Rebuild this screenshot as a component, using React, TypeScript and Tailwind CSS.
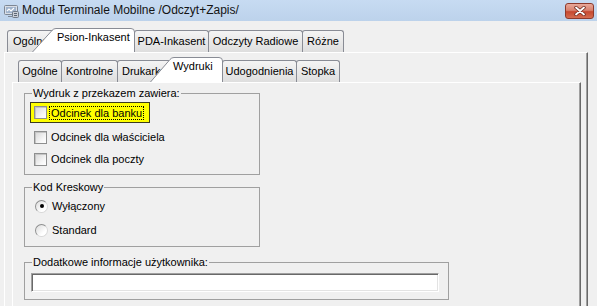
import type { ReactNode } from 'react';

function AppIcon() {
  return (
    <svg width="17" height="16" viewBox="0 0 17 16" className="shrink-0">
      <rect x="1.5" y="2.5" width="13" height="9" rx="1" fill="#d9dee6" stroke="#7d8794" />
      <rect x="3" y="4" width="10" height="6" fill="#9fb3cc" />
      <path d="M4 8l2-2 2 2 3-3" stroke="#ffffff" strokeWidth="1.2" fill="none" />
      <rect x="9.5" y="8.5" width="6" height="6" rx="1" fill="#c9ced6" stroke="#6f7986" />
      <path d="M11 10.5h3M11 12.5h3" stroke="#5b6573" />
      <path d="M5 13.5h4" stroke="#7d8794" />
    </svg>
  );
}

function CloseButton() {
  return (
    <div className="mt-px mr-[3px] ml-auto flex h-[16px] w-[29px] items-center justify-center rounded-[3px] border border-[#8d3a2c] bg-[linear-gradient(#e9a99a_0%,#d8826f_45%,#c6482f_55%,#d56d50_100%)]">
      <svg width="12" height="10" viewBox="0 0 12 10">
        <path d="M2 1.5l8 7M10 1.5l-8 7" stroke="#6d2a1e" strokeWidth="3.4" strokeLinecap="round" />
        <path d="M2 1.5l8 7M10 1.5l-8 7" stroke="#ffffff" strokeWidth="1.8" strokeLinecap="round" />
      </svg>
    </div>
  );
}

function Tab({ label, className }: { label: string; className: string }) {
  return (
    <div
      className={`-ml-px flex shrink-0 items-center justify-center overflow-hidden whitespace-nowrap rounded-t-[3px] border border-b-0 border-[#898c95] bg-[linear-gradient(#f4f4f4,#dedede)] pb-px first:ml-0 ${className}`}
    >
      {label}
    </div>
  );
}

// selected tab: slanted left edge drawn over the previous tab
function ActiveTab({ label, w, h, className }: { label: string; w: number; h: number; className: string }) {
  const d = `M0.5 ${h} L${w * 0 + 20} 2.5 Q21.5 0.5 24 0.5 L${w - 4} 0.5 Q${w - 0.5} 0.5 ${w - 0.5} 4 L${w - 0.5} ${h}`;
  return (
    <div className={`relative z-10 shrink-0 whitespace-nowrap ${className}`}>
      <svg className="absolute inset-0" width={w} height={h} viewBox={`0 0 ${w} ${h}`}>
        <path d={d} fill="#ffffff" stroke="#898c95" />
      </svg>
      <span className="relative">{label}</span>
    </div>
  );
}

function Group({ title, className, children }: { title: string; className: string; children: ReactNode }) {
  return (
    <fieldset className={`border border-[#a0a0a0] ${className}`}>
      <legend className="ml-[7px] px-px">{title}</legend>
      {children}
    </fieldset>
  );
}

function Check() {
  return (
    <span className="h-[13px] w-[13px] shrink-0 border border-[#8e8f8f] bg-[linear-gradient(135deg,#d6d6d6,#f7f7f7_70%,#ffffff)] shadow-[inset_1px_1px_0_#c4c4c4]" />
  );
}

function Radio({ on }: { on?: boolean }) {
  return (
    <span className="flex h-[13px] w-[13px] shrink-0 items-center justify-center rounded-full border border-[#8e8f8f] border-b-[#d8d8d8] border-r-[#d8d8d8] bg-[linear-gradient(135deg,#dcdcdc,#ffffff_70%)]">
      {on && <span className="h-[4px] w-[4px] rounded-full bg-black" />}
    </span>
  );
}

export default function App() {
  return (
    <div className="flex h-[306px] w-[597px] flex-col overflow-hidden bg-[#f0f0f0] font-['Liberation_Sans',Arial,sans-serif] text-[11px] leading-[13px] text-black">
      {/* title bar */}
      <div className="flex h-[21px] shrink-0 items-center bg-[linear-gradient(#c7dbf2,#bcd2eb)] pl-[3px]">
        <AppIcon />
        <span className="ml-[2px] text-[12px] leading-[15px] text-[#141414]">Moduł Terminale Mobilne /Odczyt+Zapis/</span>
        <CloseButton />
      </div>

      {/* outer tabs */}
      <div className="mt-[6px] flex h-[25px] shrink-0 items-end pl-[7px]">
        <Tab label="Ogólne" className="h-[22px] w-[50px] justify-start pl-[5px]" />
        <ActiveTab label="Psion-Inkasent" w={103} h={24} className="-ml-[25px] h-[24px] w-[103px] pt-[3px] pl-[25px]" />
        <Tab label="PDA-Inkasent" className="h-[22px] w-[75px]" />
        <Tab label="Odczyty Radiowe" className="h-[22px] w-[95px]" />
        <Tab label="Różne" className="h-[22px] w-[42px]" />
      </div>

      {/* outer panel */}
      <div className="ml-[4px] flex w-[584px] flex-1 flex-col border-t border-r border-l border-t-white border-r-[#696969] border-l-white pt-[4px] pl-[7px] shadow-[inset_-1px_0_0_#a0a0a0]">
        {/* inner tabs */}
        <div className="flex h-[25px] shrink-0 items-end pl-[6px]">
          <Tab label="Ogólne" className="h-[22px] w-[44px]" />
          <Tab label="Kontrolne" className="h-[22px] w-[57px]" />
          <Tab label="Drukarka" className="h-[22px] w-[55px] justify-start pl-[4px]" />
          <ActiveTab label="Wydruki" w={73} h={25} className="-ml-[22px] h-[25px] w-[73px] pt-[3px] pl-[23px]" />
          <Tab label="Udogodnienia" className="h-[22px] w-[75px]" />
          <Tab label="Stopka" className="h-[22px] w-[44px]" />
        </div>

        {/* inner panel */}
        <div className="flex w-[569px] flex-1 flex-col border-t border-r border-l border-t-white border-r-[#696969] border-l-white pt-[4px] pl-[11px] shadow-[inset_-1px_0_0_#a0a0a0]">
          <Group title="Wydruk z przekazem zawiera:" className="w-[236px] pb-[4px]">
            <div className="mt-[2px] ml-[5px] flex h-[21px] w-[120px] items-center gap-[2px] border border-[#3c3c1e] bg-[#ffff00] pl-[3px]">
              <Check />
              <span className="border border-dotted border-black px-px leading-[12px]">Odcinek dla banku</span>
            </div>
            <div className="mt-[3px] flex h-[22px] items-center gap-[4px] pl-[9px]">
              <Check />
              <span>Odcinek dla właściciela</span>
            </div>
            <div className="flex h-[22px] items-center gap-[4px] pl-[9px]">
              <Check />
              <span>Odcinek dla poczty</span>
            </div>
          </Group>

          <Group title="Kod Kreskowy" className="mt-[6px] w-[236px] pb-[4px]">
            <div className="flex h-[24px] items-center gap-[4px] pl-[10px]">
              <Radio on />
              <span>Wyłączony</span>
            </div>
            <div className="flex h-[24px] items-center gap-[4px] pl-[10px]">
              <Radio />
              <span>Standard</span>
            </div>
          </Group>

          <Group title="Dodatkowe informacje użytkownika:" className="mt-[9px] w-[425px] pb-[7px]">
            <div className="mt-[4px] ml-[6px] h-[19px] w-[408px] border border-t-[#a0a0a0] border-r-white border-b-white border-l-[#a0a0a0] bg-white shadow-[inset_1px_1px_0_#696969,inset_-1px_-1px_0_#e3e3e3]" />
          </Group>
        </div>
      </div>
    </div>
  );
}
